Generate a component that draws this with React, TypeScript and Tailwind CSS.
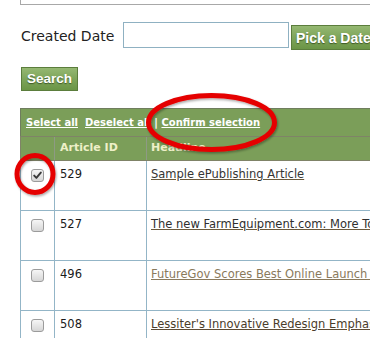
import React from "react";

type Row = { id: string; text: string; color: string; checked?: boolean };

const rows: Row[] = [
  { id: "529", text: "Sample ePublishing Article", color: "text-[#353535] decoration-[#6b5a3c]", checked: true },
  { id: "527", text: "The new FarmEquipment.com: More Tools for Farmers", color: "text-[#2f2f2f] decoration-[#6b5a3c]" },
  { id: "496", text: "FutureGov Scores Best Online Launch of the Year", color: "text-[#8a7a5c] decoration-[#8a7a5c]" },
  { id: "508", text: "Lessiter's Innovative Redesign Emphasizes Content", color: "text-[#4a3c2a] decoration-[#5e4c34]" },
];

function Checkbox({ checked }: { checked?: boolean }) {
  return (
    <div className="shrink-0 w-[13px] h-[13px] rounded-[3px] border border-[#9b9b9b] bg-gradient-to-b from-[#f6f6f6] to-[#d6d6d6] flex items-center justify-center">
      {checked && (
        <svg width="9" height="9" viewBox="0 0 9 9">
          <path d="M1.2 4.6 L3.4 6.9 L7.8 1.6" fill="none" stroke="#3a3a3a" strokeWidth="1.9" strokeLinecap="round" strokeLinejoin="round" />
        </svg>
      )}
    </div>
  );
}

export default function App() {
  return (
    <div className="relative w-[370px] h-[338px] overflow-hidden bg-white font-['DejaVu_Sans',sans-serif]">
      {/* field above, mostly scrolled out */}
      <div className="ml-[20px] h-[5px] w-[400px] border-l border-b border-[#a8a8a8]" />

      {/* Created Date row */}
      <div className="mt-[17px] flex items-start pl-[21px] w-[460px]">
        <div className="shrink-0 w-[102px] h-[26px] flex items-center pt-[2px] text-[14px] text-[#222] whitespace-nowrap">
          Created Date
        </div>
        <div className="shrink-0 w-[166px] h-[26px] border border-[#8fb1c2] bg-white" />
        <button className="shrink-0 ml-[2px] mt-[3px] h-[25px] pl-[4px] pr-[8px] border border-[#5b7d3c] bg-gradient-to-b from-[#95b872] via-[#7ea55a] to-[#6b9546] text-white font-bold text-[14px] font-['Liberation_Sans',Arial,sans-serif] [text-shadow:0_1px_1px_rgba(40,60,20,0.7)] whitespace-nowrap leading-none">
          Pick a Date
        </button>
      </div>

      {/* Search */}
      <button className="mt-[17px] ml-[21px] w-[57px] h-[24px] flex items-center justify-center border border-[#5b7d3c] bg-gradient-to-b from-[#95b872] via-[#7ea55a] to-[#6b9546] text-white font-bold text-[13.5px] font-['Liberation_Sans',Arial,sans-serif] [text-shadow:0_1px_1px_rgba(40,60,20,0.7)] leading-none">
        Search
      </button>

      {/* Table */}
      <div className="mt-[17px] ml-[20px] w-[520px]">
        <div className="h-[28px] border-t border-l border-[#6f7d5e] bg-[#7b9e59] flex items-center pl-[5px] text-[10px] font-bold text-white whitespace-nowrap">
          <span className="underline">Select all</span>
          <span className="w-[7px]" />
          <span className="underline">Deselect all</span>
          <span>&nbsp;|&nbsp;</span>
          <span className="underline">Confirm selection</span>
        </div>
        <div className="h-[24px] flex border-t border-l border-[#7f8367] bg-[#7b9e59] text-[11px] font-bold text-[#eef0c8]">
          <div className="shrink-0 w-[33px]" />
          <div className="shrink-0 w-[92px] border-l border-[#8e9a84] flex items-center pl-[5px]">Article ID</div>
          <div className="flex-1 border-l border-[#8e9a84] flex items-center pl-[4px]">Headline</div>
        </div>
        {rows.map((r, i) => (
          <div
            key={r.id}
            className={`h-[50px] flex border-l border-[#93b5c7] ${i === 0 ? "border-t border-t-[#7f8367]" : "border-t"}`}
          >
            <div className="shrink-0 w-[33px] flex justify-center pt-[8px]">
              <Checkbox checked={r.checked} />
            </div>
            <div className="shrink-0 w-[92px] border-l border-[#93b5c7] pl-[5px] pt-[5px] text-[11.5px] text-[#1a1a1a]">
              {r.id}
            </div>
            <div className="flex-1 min-w-0 border-l border-[#93b5c7] pl-[4px] pt-[5px] text-[11.5px] whitespace-nowrap overflow-hidden">
              <span className={`underline ${r.color}`}>{r.text}</span>
            </div>
          </div>
        ))}
      </div>

      {/* red annotation circles */}
      <svg className="absolute inset-0 pointer-events-none" width="370" height="338" viewBox="0 0 370 338">
        <defs>
          <filter id="sh" x="-20%" y="-20%" width="140%" height="140%">
            <feDropShadow dx="1" dy="1.5" stdDeviation="1.2" floodColor="#000" floodOpacity="0.35" />
          </filter>
        </defs>
        <ellipse cx="211.5" cy="122.5" rx="63" ry="27" fill="none" stroke="#e50000" strokeWidth="5" filter="url(#sh)" />
        <ellipse cx="35" cy="174" rx="18" ry="18.5" fill="none" stroke="#e50000" strokeWidth="5" filter="url(#sh)" />
      </svg>
    </div>
  );
}
